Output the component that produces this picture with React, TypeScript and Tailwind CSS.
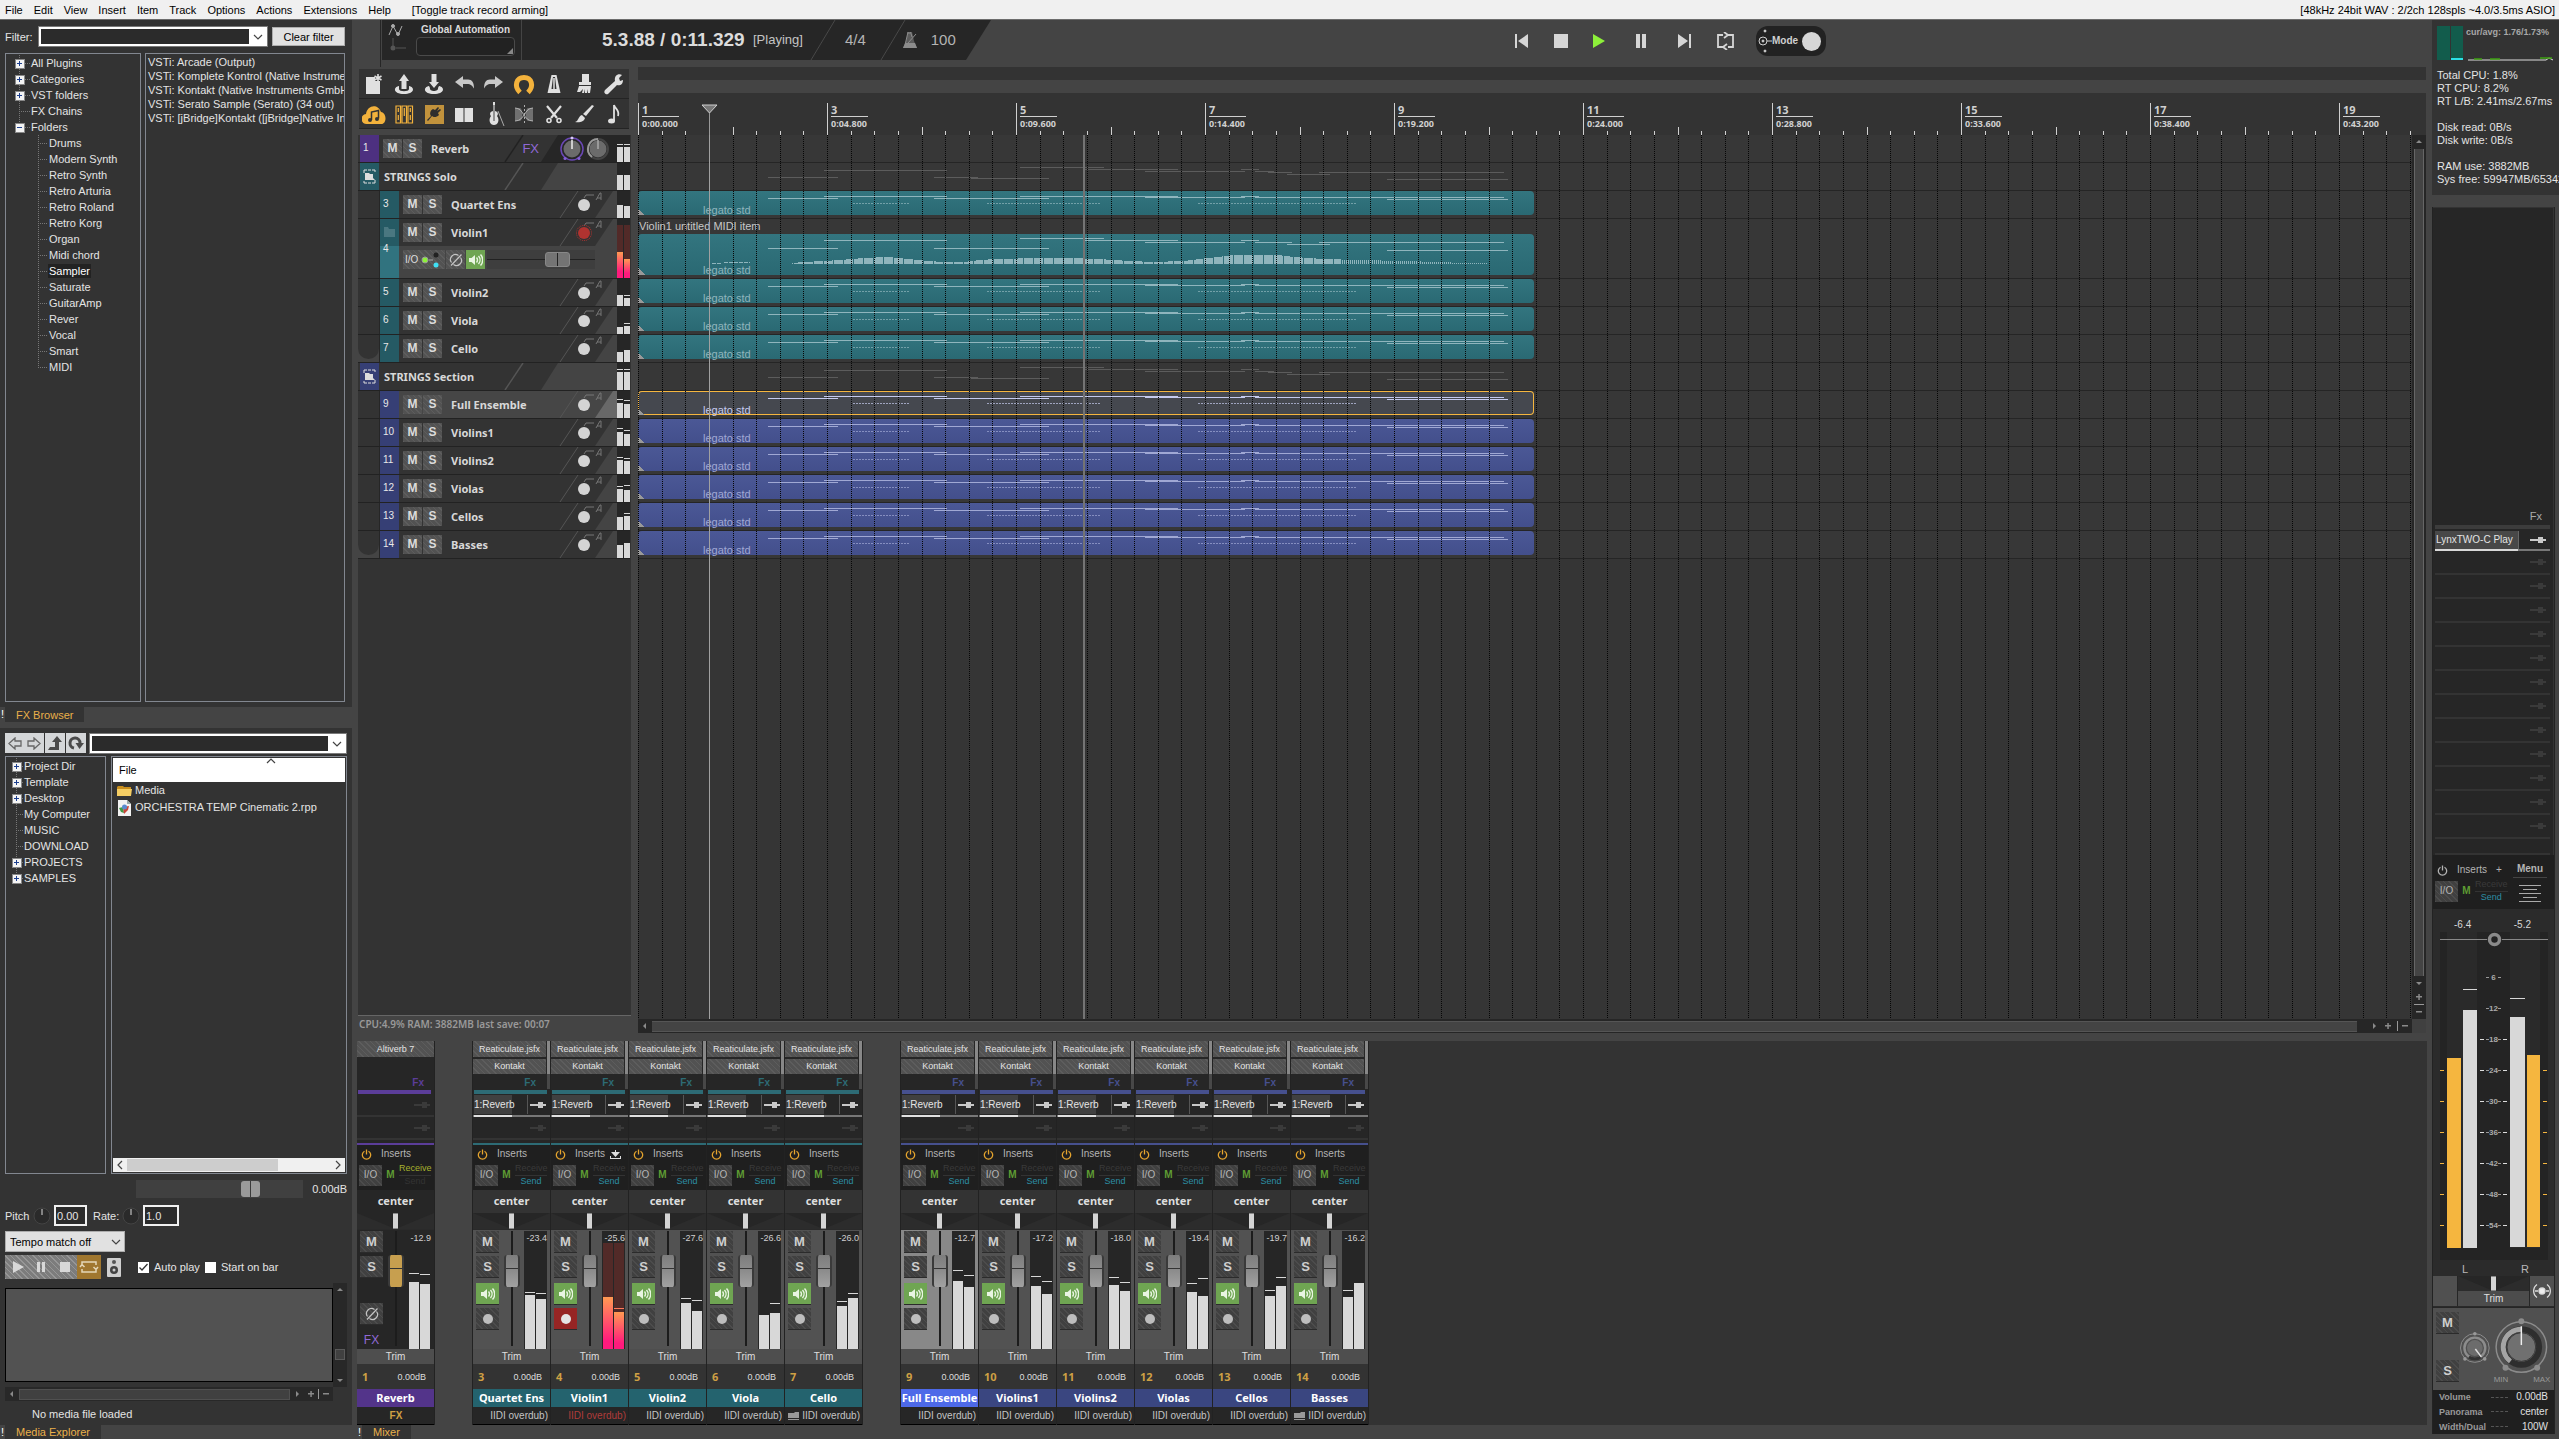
import type { ReactNode } from 'react';
import clsx from 'clsx';

type Tone = 'purple' | 'teal' | 'blue';

type Track = {
  id: number;
  name: string;
  tone: Tone;
  kind: 'fx' | 'folder' | 'track';
  meter: [number, number];
  peaks?: [number, number];
  selected?: boolean;
  armed?: boolean;
};

type Strip = {
  id: number;
  name: string;
  tone: Tone;
  db: string;
  bars: [number, number];
  peaks: [number, number];
  selected?: boolean;
  armed?: boolean;
  last?: boolean;
};

const MENU = ['File', 'Edit', 'View', 'Insert', 'Item', 'Track', 'Options', 'Actions', 'Extensions', 'Help'];

const FX_ROOTS = ['All Plugins', 'Categories', 'VST folders', 'FX Chains', 'Folders'];
const FX_FOLDERS = [
  'Drums', 'Modern Synth', 'Retro Synth', 'Retro Arturia', 'Retro Roland', 'Retro Korg', 'Organ',
  'Midi chord', 'Sampler', 'Saturate', 'GuitarAmp', 'Rever', 'Vocal', 'Smart', 'MIDI',
];
const PLUGINS = [
  'VSTi: Arcade (Output)',
  'VSTi: Komplete Kontrol (Native Instrumer',
  'VSTi: Kontakt (Native Instruments GmbH',
  'VSTi: Serato Sample (Serato) (34 out)',
  'VSTi: [jBridge]Kontakt ([jBridge]Native Ins',
];
const MEDIA_ROOTS = ['Project Dir', 'Template', 'Desktop', 'My Computer', 'MUSIC', 'DOWNLOAD', 'PROJECTS', 'SAMPLES'];
const NO_CHILDREN = ['FX Chains', 'My Computer', 'MUSIC', 'DOWNLOAD'];

const TRACKS: Track[] = [
  { id: 1, name: 'Reverb', tone: 'purple', kind: 'fx', meter: [15, 15], peaks: [17, 17] },
  { id: 2, name: 'STRINGS Solo', tone: 'teal', kind: 'folder', meter: [15, 15] },
  { id: 3, name: 'Quartet Ens', tone: 'teal', kind: 'track', meter: [13, 12] },
  { id: 4, name: 'Violin1', tone: 'teal', kind: 'track', meter: [26, 19], armed: true },
  { id: 5, name: 'Violin2', tone: 'teal', kind: 'track', meter: [11, 8], peaks: [0, 10] },
  { id: 6, name: 'Viola', tone: 'teal', kind: 'track', meter: [7, 8], peaks: [0, 10] },
  { id: 7, name: 'Cello', tone: 'teal', kind: 'track', meter: [10, 12] },
  { id: 8, name: 'STRINGS Section', tone: 'blue', kind: 'folder', meter: [18, 18], peaks: [20, 20] },
  { id: 9, name: 'Full Ensemble', tone: 'blue', kind: 'track', meter: [15, 14], peaks: [18, 17], selected: true },
  { id: 10, name: 'Violins1', tone: 'blue', kind: 'track', meter: [14, 12], peaks: [17, 15] },
  { id: 11, name: 'Violins2', tone: 'blue', kind: 'track', meter: [14, 13], peaks: [16, 15] },
  { id: 12, name: 'Violas', tone: 'blue', kind: 'track', meter: [13, 12], peaks: [15, 16] },
  { id: 13, name: 'Cellos', tone: 'blue', kind: 'track', meter: [13, 14], peaks: [0, 16] },
  { id: 14, name: 'Basses', tone: 'blue', kind: 'track', meter: [13, 15] },
];

const SOLO_STRIPS: Strip[] = [
  { id: 3, name: 'Quartet Ens', tone: 'teal', db: '-23.4', bars: [54, 50], peaks: [56, 55] },
  { id: 4, name: 'Violin1', tone: 'teal', db: '-25.6', bars: [52, 37], peaks: [0, 40], armed: true },
  { id: 5, name: 'Violin2', tone: 'teal', db: '-27.6', bars: [46, 38], peaks: [50, 48] },
  { id: 6, name: 'Viola', tone: 'teal', db: '-26.6', bars: [34, 36], peaks: [0, 45] },
  { id: 7, name: 'Cello', tone: 'teal', db: '-26.0', bars: [43, 51], peaks: [47, 55], last: true },
];
const SECTION_STRIPS: Strip[] = [
  { id: 9, name: 'Full Ensemble', tone: 'blue', db: '-12.7', bars: [68, 62], peaks: [78, 73], selected: true },
  { id: 10, name: 'Violins1', tone: 'blue', db: '-17.2', bars: [63, 55], peaks: [72, 67] },
  { id: 11, name: 'Violins2', tone: 'blue', db: '-18.0', bars: [64, 58], peaks: [71, 66] },
  { id: 12, name: 'Violas', tone: 'blue', db: '-19.4', bars: [57, 53], peaks: [65, 70] },
  { id: 13, name: 'Cellos', tone: 'blue', db: '-19.7', bars: [53, 63], peaks: [58, 71] },
  { id: 14, name: 'Basses', tone: 'blue', db: '-16.2', bars: [52, 66], peaks: [58, 0], last: true },
];
const REVERB_STRIP: Strip = { id: 1, name: 'Reverb', tone: 'purple', db: '-12.9', bars: [67, 65], peaks: [75, 74] };

const MARKERS = [
  ['1', '0:00.000'], ['3', '0:04.800'], ['5', '0:09.600'], ['7', '0:14.400'], ['9', '0:19.200'],
  ['11', '0:24.000'], ['13', '0:28.800'], ['15', '0:33.600'], ['17', '0:38.400'], ['19', '0:43.200'],
];

// note runs as [start, end, y]
const NOTES = [
  [130, 200, 7], [186, 309, 5], [296, 411, 7], [382, 540, 5], [507, 607, 6],
  [603, 621, 5], [617, 866, 6], [749, 870, 8],
];
const WIDE_NOTES = [
  [130, 200, 14], [186, 309, 6], [296, 411, 14], [382, 466, 4], [447, 540, 6], [507, 607, 8],
  [603, 621, 6], [617, 654, 8], [649, 692, 10], [681, 866, 8], [749, 870, 16],
];
const FOLDER_NOTES = [
  [130, 200, 14], [186, 309, 7], [296, 340, 14], [333, 411, 15], [382, 466, 4], [447, 540, 6],
  [507, 607, 8], [603, 621, 6], [617, 636, 8], [630, 654, 9], [649, 692, 11], [681, 866, 9], [749, 870, 16],
];

// velocity envelope of the tall item as [x, height]
const ENVELOPE = [
  [154, 1], [165, 2], [185, 3], [200, 4], [225, 6], [250, 7], [270, 5], [290, 3], [305, 2], [325, 2],
  [340, 4], [360, 5], [400, 6], [430, 6], [460, 5], [490, 3], [515, 2], [545, 3], [560, 5], [580, 7],
  [595, 9], [640, 9], [655, 7], [685, 5], [720, 4], [765, 3], [800, 2], [825, 1], [850, 1],
];

const HATCH = 'bg-[repeating-linear-gradient(45deg,#5d5d5d_0_1px,#525252_1px_4px)]';
const HATCH_DARK = 'bg-[repeating-linear-gradient(45deg,#4c4c4c_0_1px,#404040_1px_4px)]';
const NAME_FONT = "font-['Noto_Sans',sans-serif] font-bold";

function velocityBars() {
  const out: [number, number][] = [];
  for (let x = 154; x < 850; x += 2) {
    const i = ENVELOPE.findIndex(([px]) => px > x);
    const [x0, h0] = ENVELOPE[i - 1];
    const [x1, h1] = ENVELOPE[i];
    out.push([x, Math.round(h0 + ((h1 - h0) * (x - x0)) / (x1 - x0))]);
  }
  return out;
}

/* ---------- shared bits ---------- */

function Chevron({ className }: { className?: string }) {
  return (
    <svg className={className} width="10" height="6" viewBox="0 0 10 6" fill="none" stroke="#444" strokeWidth="1.2">
      <path d="M1 1l4 4 4-4" />
    </svg>
  );
}

function TreeRow({ label, indent, stem, box, open, last, active }: {
  label: string; indent: number; stem: number; box?: boolean; open?: boolean; last?: boolean; active?: boolean;
}) {
  return (
    <li className="flex h-4 items-center whitespace-nowrap">
      <svg width={indent} height="16" viewBox={`0 0 ${indent} 16`} className="shrink-0" shapeRendering="crispEdges">
        <path d={`M${stem + 0.5} 0V${last ? 8 : 16}M${stem} 8.5H${indent}`} stroke="#777" strokeDasharray="1 1" fill="none" />
        {box && (
          <g>
            <rect x={stem - 4} y="4" width="9" height="9" fill="#f4f4f4" stroke="#888" strokeWidth="1" />
            <path d={open ? `M${stem - 2} 8.5h5` : `M${stem - 2} 8.5h5M${stem + 0.5} 6v5`} stroke="#1d3f8f" />
          </g>
        )}
      </svg>
      <span className={clsx('px-px', active && 'bg-[#222] text-white')}>{label}</span>
    </li>
  );
}

function DockTab({ label, className }: { label: string; className?: string }) {
  return (
    <div className={clsx('flex items-stretch text-[11px] leading-[14px]', className)}>
      <span className="w-[5px] text-center text-white">!</span>
      <button className="bg-[#333] px-[11px] text-[#eab04a]">{label}</button>
    </div>
  );
}

function ScrollArrow({ dir }: { dir: 'up' | 'down' | 'left' | 'right' | 'plus' | 'minus' }) {
  const d = {
    up: 'M4 8l3-3 3 3z', down: 'M4 6l3 3 3-3z', left: 'M8 4L5 7l3 3z', right: 'M6 4l3 3-3 3z',
    plus: 'M4 6h6v1.500H4zM6.300 4h1.500v6H6.300z', minus: 'M4 6h6v1.500H4z',
  }[dir];
  return (
    <svg width="14" height="14" viewBox="0 0 14 14" fill="#8a8a8a" className="shrink-0">
      <path d={d} />
    </svg>
  );
}

function SpeakerIcon() {
  return (
    <svg width="15" height="14" viewBox="0 0 15 14" fill="none" stroke="#e9f5e2" strokeWidth="1.4">
      <path d="M1 5h2.500L7 2v10L3.500 9H1z" fill="#e9f5e2" stroke="none" />
      <path d="M8.500 4.500a4 4 0 010 5M10.500 3a6 6 0 010 8M12.500 1.500a8 8 0 010 11" />
    </svg>
  );
}

function PhaseIcon() {
  return (
    <svg width="14" height="14" viewBox="0 0 14 14" fill="none" stroke="#c4c4c4" strokeWidth="1.2">
      <path d="M2.500 9.500a5 5 0 017-7M11.500 4.500a5 5 0 01-7 7M2 12.500L12.500 1.500" />
    </svg>
  );
}

function PowerIcon({ color = '#e6a52e' }: { color?: string }) {
  return (
    <svg width="11" height="11" viewBox="0 0 11 11" fill="none" stroke={color} strokeWidth="1.3">
      <path d="M3.500 2.200a4.200 4.200 0 104 0M5.500 0.500v5" />
    </svg>
  );
}

function SendPlug({ active }: { active?: boolean }) {
  return (
    <svg width="16" height="6" viewBox="0 0 16 6" fill={active ? '#c8c8c8' : '#3a3a3a'} className="shrink-0">
      <path d="M0 2h8V0h5v2h3v2h-3v2H8V4H0z" />
    </svg>
  );
}

/* ---------- menu and transport ---------- */

function MenuBar() {
  return (
    <header className="flex h-5 shrink-0 items-center border-b border-[#6c6c6c] bg-[#f0f0f0] pr-1 pl-[5px] text-[11px] text-black">
      <nav className="flex gap-[11px]">
        {MENU.map((m) => (
          <button key={m}>{m}</button>
        ))}
      </nav>
      <span className="ml-[21px]">[Toggle track record arming]</span>
      <span className="ml-auto">[48kHz 24bit WAV : 2/2ch 128spls ~4.0/3.5ms ASIO]</span>
    </header>
  );
}

function TransportButton({ label, children }: { label: string; children: ReactNode }) {
  return (
    <button aria-label={label} className="flex w-[41px] justify-center">
      <svg width="24" height="18" viewBox="0 0 24 18" fill="#d6d6d6">{children}</svg>
    </button>
  );
}

function Transport() {
  return (
    <div className="flex h-[47px] shrink-0">
      <div className="ml-[23px] w-px bg-[#262626]" />
      <div className="relative ml-px flex h-10 w-[609px] items-center bg-[#262626] text-[#dcdcdc] [clip-path:polygon(0_0,100%_0,584px_100%,0_100%)]">
        <div className="flex h-10 w-[140px] shrink-0 gap-2 border-r border-[#444] pl-1.5">
          <svg width="20" height="36" viewBox="0 0 20 36" fill="none" stroke="#aaa" className="shrink-0">
            <path d="M1 15L5 6l5 9 4-9" />
            <circle cx="5" cy="6" r="1.500" fill="#aaa" />
            <circle cx="10" cy="14" r="1.500" fill="#aaa" />
            <path d="M5 18v8M8 28h10" stroke="#555" />
            <circle cx="5" cy="28" r="2.500" fill="#555" stroke="none" />
          </svg>
          <label className="flex w-[99px] flex-col items-center text-[10px] font-bold leading-[14px]">
            <span className="pt-[3px] whitespace-nowrap">Global Automation</span>
            <span className="relative w-full">
              <select className="block h-[19px] w-full appearance-none rounded-sm border border-[#4a4a4a] bg-[#222]" />
              <svg width="6" height="6" viewBox="0 0 6 6" className="absolute right-0.5 bottom-0.5" fill="#888"><path d="M6 0v6H0z" /></svg>
            </span>
          </label>
        </div>
        <span className="ml-[80px] w-[151px] shrink-0 text-[19px] font-bold whitespace-nowrap">5.3.88 / 0:11.329</span>
        <span className="text-[13px] text-[#c4c4c4]">[Playing]</span>
        <svg width="100" height="40" viewBox="0 0 100 40" className="absolute top-0 left-[426px]" stroke="#484848" fill="none">
          <path d="M27 0L3 40M97 0L73 40" />
        </svg>
        <span className="ml-[42px] text-[15px] text-[#b4b4b4]">4/4</span>
        <svg width="16" height="18" viewBox="0 0 16 18" className="ml-[36px]" fill="none">
          <path d="M6 1h4l2 9 3 7H1l3-7z" fill="#5c5c5c" />
          <path d="M3 12h10l2 5H1z" fill="#8c8c8c" />
          <path d="M5.500 2h3M6 1L3.500 12M8.500 1L10 6M6 12l8-9" stroke="#8c8c8c" />
        </svg>
        <span className="ml-[13px] text-[15px] text-[#b4b4b4]">100</span>
      </div>
      <div className="ml-[509px] flex h-[42px] items-center">
        <TransportButton label="Go to start"><path d="M6 2h2v14H6zM19 2v14L9 9z" /></TransportButton>
        <TransportButton label="Stop"><path d="M4 2h14v14H4z" /></TransportButton>
        <TransportButton label="Play"><path d="M2 2l12 7-12 7z" fill="#8df03a" /></TransportButton>
        <TransportButton label="Pause"><path d="M4 2h4v14H4zM10 2h4v14h-4z" /></TransportButton>
        <TransportButton label="Go to end"><path d="M5 2l10 7-10 7zM16 2h2v14h-2z" /></TransportButton>
        <TransportButton label="Repeat">
          <path d="M9 3H4v12h6M13 3h6v12h-5M10 0l4 3-4 3M13 12l-4 3 4 3" fill="none" stroke="#d6d6d6" strokeWidth="1.800" />
        </TransportButton>
        <button className="ml-[10px] flex h-[30px] w-[70px] items-center rounded-[12px] bg-[#222] pl-0.5 text-[10px] font-bold text-[#d0d0d0]">
          <svg width="14" height="26" viewBox="0 0 14 26" fill="none" stroke="#d0d0d0">
            <circle cx="5" cy="13" r="4" />
            <circle cx="5" cy="13" r="1" fill="#d0d0d0" />
            <path d="M9 13h5" />
            <circle cx="7" cy="3" r="1" fill="#d0d0d0" />
            <circle cx="7" cy="23" r="1" fill="#d0d0d0" />
          </svg>
          Mode
          <span className="ml-1 size-[19px] rounded-full bg-[#d6d6d6]" />
        </button>
      </div>
    </div>
  );
}

/* ---------- left docks ---------- */

function Combo({ id, className }: { id: string; className?: string }) {
  return (
    <span className={clsx('flex h-[21px] items-center border border-[#7a7a7a] bg-white p-0.5 pr-1', className)}>
      <input id={id} aria-label={id} className="h-full min-w-0 flex-1 bg-[#2b2b2b] px-1 text-white outline-none" />
      <Chevron className="ml-1" />
    </span>
  );
}

function FxBrowser() {
  return (
    <section className="flex min-h-0 flex-1 flex-col bg-[#333] px-[5px] pb-[5px] text-[#e4e4e4]">
      <div className="flex h-[33px] items-center gap-1 pr-0.5">
        <label htmlFor="Filter" className="w-[29px] shrink-0">Filter:</label>
        <Combo id="Filter" className="flex-1" />
        <button className="h-[19px] w-[73px] border border-[#adadad] bg-[#e1e1e1] text-black">Clear filter</button>
      </div>
      <div className="flex min-h-0 flex-1 gap-1 pr-0.5">
        <ul className="w-[136px] border border-[#828790] pt-px">
          {FX_ROOTS.map((r) => (
            <TreeRow key={r} label={r} indent={24} stem={13} box={!NO_CHILDREN.includes(r)} open={r === 'Folders'} last={r === 'Folders'} />
          ))}
          {FX_FOLDERS.map((f, i) => (
            <TreeRow key={f} label={f} indent={42} stem={32} last={i === FX_FOLDERS.length - 1} active={f === 'Sampler'} />
          ))}
        </ul>
        <ul className="min-w-0 flex-1 overflow-hidden border border-[#828790] pt-px pl-0.5 leading-[14px] whitespace-nowrap">
          {PLUGINS.map((p) => (
            <li key={p}>{p}</li>
          ))}
        </ul>
      </div>
    </section>
  );
}

function MiniKnob() {
  return (
    <svg width="18" height="18" viewBox="0 0 18 18">
      <circle cx="9" cy="9" r="8" fill="#2a2a2a" stroke="#444" />
      <path d="M9 2v6" stroke="#ddd" />
    </svg>
  );
}

function MediaExplorer() {
  return (
    <section className="flex shrink-0 flex-col bg-[#333] px-[5px] pt-[5px] text-[#e4e4e4]">
      <div className="flex h-[21px] gap-px">
        <div className="flex h-5 w-[39px] bg-[#d4d6d8]">
          <button aria-label="Back" className="flex-1 pl-[3px]">
            <svg width="15" height="13" viewBox="0 0 15 13" fill="none" stroke="#666" strokeWidth="1.300"><path d="M7 1L1 6.500 7 12V9h6V4H7z" /></svg>
          </button>
          <button aria-label="Forward" className="flex-1 pl-0.5">
            <svg width="15" height="13" viewBox="0 0 15 13" fill="none" stroke="#666" strokeWidth="1.300"><path d="M7 1l6 5.500L7 12V9H1V4h6z" /></svg>
          </button>
        </div>
        <button aria-label="Parent folder" className="h-5 w-5 bg-[#d4d6d8] pl-[3px]">
          <svg width="15" height="15" viewBox="0 0 15 15" fill="#4a4a4a"><path d="M9 0l5 6h-3v8H0l2-3h5V6H4z" /></svg>
        </button>
        <button aria-label="Refresh" className="h-5 w-5 bg-[#d4d6d8] pl-0.5">
          <svg width="16" height="16" viewBox="0 0 16 16"><path d="M6 13a5 5 0 116-5" fill="none" stroke="#4a4a4a" strokeWidth="3" /><path d="M7.500 8h8.500l-4.500 6z" fill="#4a4a4a" /></svg>
        </button>
        <Combo id="Path" className="ml-0.5 flex-1" />
      </div>
      <div className="mt-0.5 flex h-[418px] gap-[5px]">
        <ul className="w-[101px] border border-[#828790] pt-px">
          {MEDIA_ROOTS.map((r, i) => (
            <TreeRow key={r} label={r} indent={17} stem={10} box={!NO_CHILDREN.includes(r)} last={i === MEDIA_ROOTS.length - 1} />
          ))}
        </ul>
        <div className="flex min-w-0 flex-1 flex-col border border-[#828790] p-px">
          <button className="relative h-6 bg-white pl-[6px] text-left text-black">
            File
            <Chevron className="absolute top-0 left-[153px] rotate-180" />
          </button>
          <ul className="flex-1 leading-[17px] whitespace-nowrap">
            <li className="flex items-center gap-[3px] pl-1">
              <svg width="15" height="12" viewBox="0 0 15 12"><path d="M0 2l1-1h5l1 1h7v9H0z" fill="#c98f1e" /><path d="M0 4h15l-1 7H0z" fill="#f4cd63" /></svg>
              Media
            </li>
            <li className="flex items-center gap-[3px] pl-1">
              <svg width="15" height="16" viewBox="0 0 15 16"><path d="M1 0h9l4 4v12H1z" fill="#f2f2f2" /><path d="M10 0v4h4z" fill="#9aa" /><path d="M2 8l4-1 1 6-3-1z" fill="#3f9a47" /><path d="M6 7l6-1-1 4-4 4z" fill="#c9453a" /><circle cx="7.500" cy="7" r="2.500" fill="#5a8bd0" /></svg>
              ORCHESTRA TEMP Cinematic 2.rpp
            </li>
          </ul>
          <div className="flex h-[14px] items-center bg-[#f0f0f0]">
            <Chevron className="w-[14px] rotate-90" />
            <span className="h-3 w-[151px] bg-[#cdcdcd]" />
            <Chevron className="ml-auto w-[14px] -rotate-90" />
          </div>
        </div>
      </div>
      <div className="mt-1.5 flex h-[18px] items-center justify-end">
        <input
          type="range" aria-label="Preview volume" defaultValue={71}
          className="h-[18px] w-[167px] appearance-none bg-[#404040] [&::-webkit-slider-thumb]:h-4 [&::-webkit-slider-thumb]:w-[19px] [&::-webkit-slider-thumb]:appearance-none [&::-webkit-slider-thumb]:rounded-[3px] [&::-webkit-slider-thumb]:bg-[linear-gradient(90deg,#9a9a9a_0_9px,#3a3a3a_9px_10px,#9a9a9a_10px)]"
        />
        <output className="w-[44px] text-right">0.00dB</output>
      </div>
      <div className="mt-[7px] flex h-[21px] items-center">
        <label htmlFor="pitch" className="w-7">Pitch</label>
        <MiniKnob />
        <input id="pitch" defaultValue="0.00" className="mr-1.5 ml-[3px] h-[21px] w-[33px] border-2 border-[#f0f0f0] bg-[#2b2b2b] pl-px text-[11px] text-[#e4e4e4]" />
        <label htmlFor="rate" className="w-[29px]">Rate:</label>
        <MiniKnob />
        <input id="rate" defaultValue="1.0" className="ml-[3px] h-[21px] w-9 border-2 border-[#f0f0f0] bg-[#2b2b2b] pl-px text-[11px] text-[#e4e4e4]" />
      </div>
      <div className="relative mt-[5px] w-[120px]">
        <select aria-label="Tempo match" className="h-[21px] w-full appearance-none border border-[#adadad] bg-[#e1e1e1] pl-1 text-[11px] text-black">
          <option>Tempo match off</option>
        </select>
        <Chevron className="absolute top-2 right-1" />
      </div>
      <div className="mt-[3px] flex h-6 items-center">
        <div className="flex h-6 bg-[repeating-linear-gradient(45deg,#969696_0_1px,#7c7c7c_1px_4px)]">
          {[['Preview', 'M8 6l11 6-11 6z'], ['Pause preview', 'M8 7h3v10H8zM13 7h3v10h-3z'], ['Stop preview', 'M7 7h10v10H7z']].map(([l, d]) => (
            <button key={l} aria-label={l}><svg width="24" height="24" viewBox="0 0 24 24" fill="#d8d8d8"><path d={d} /></svg></button>
          ))}
        </div>
        <button aria-label="Repeat preview" className="size-6 bg-[#a0772f]">
          <svg width="24" height="24" viewBox="0 0 24 24" fill="none" stroke="#e4d7b8" strokeWidth="1.500"><path d="M5 10V7h14v3M19 14v3H5v-3M3 12l2-2.500L7.500 12M16.500 12l2.500 2.500 2-2.500" /></svg>
        </button>
        <button aria-label="Output" className="ml-1.5">
          <svg width="14" height="19" viewBox="0 0 14 19"><rect width="14" height="19" rx="1" fill="#cfcfcf" /><circle cx="7" cy="4" r="2" fill="#555" /><circle cx="7" cy="12" r="4" fill="#444" /><circle cx="7" cy="12" r="1.500" fill="#ccc" /></svg>
        </button>
        <label className="ml-[17px] flex items-center gap-[5px]">
          <span className="relative flex size-[11px]">
            <input type="checkbox" defaultChecked className="peer size-[11px] appearance-none bg-white" />
            <svg className="pointer-events-none absolute inset-0 hidden peer-checked:block" width="11" height="11" viewBox="0 0 11 11" fill="none" stroke="#333" strokeWidth="1.300"><path d="M1.500 5.500L4 8l5.500-6" /></svg>
          </span>
          Auto play
        </label>
        <label className="ml-[5px] flex items-center gap-[5px]">
          <input type="checkbox" className="size-[11px] appearance-none bg-white" />
          Start on bar
        </label>
      </div>
      <div className="mt-1 flex h-[104px]">
        <div className="my-[5px] flex-1 border border-black bg-[#525252]" />
        <div className="flex w-[14px] flex-col bg-[#282828]">
          <ScrollArrow dir="up" />
          <span className="mx-0.5 mt-[52px] h-[11px] border border-[#5a5a5a] bg-[#404040]" />
          <span className="mt-auto"><ScrollArrow dir="down" /></span>
        </div>
      </div>
      <div className="mr-[14px] flex h-[14px] items-center bg-[#282828]">
        <ScrollArrow dir="left" />
        <span className="h-[11px] flex-1 border border-[#505050] bg-[#404040]" />
        <ScrollArrow dir="right" />
        <ScrollArrow dir="plus" />
        <span className="h-2.5 border-l border-[#999]" />
        <ScrollArrow dir="minus" />
      </div>
      <p className="h-6 pl-[27px] leading-[26px]">No media file loaded</p>
    </section>
  );
}

/* ---------- toolbar ---------- */

const W = '#e0e0e0';
const Y = '#f3b23c';
const TOOLS: [string, ReactNode][] = [
  ['New project', <><path d="M4 5h9v4h5v13H4z" fill={W} /><path d="M16 2v8M12.500 4l7 4M19.500 4l-7 4" stroke={W} strokeWidth="1.600" /></>],
  ['Open project', <><path d="M12 2l5 7h-2.500v8h-5V9H7z" fill={W} /><path d="M7 14c-6 1-6 8 5 8s11-7 5-8v3c0 3-10 3-10 0z" fill={W} /></>],
  ['Save project', <><path d="M12 16l5-6h-2.500V2h-5v8H7z" fill={W} /><path d="M7 14c-6 1-6 8 5 8s11-7 5-8l-1 2c1 4-9 4-8 0z" fill={W} /></>],
  ['Undo', <path d="M3 10l8-6v3.500h5c4 0 6 3 6 9-2-3-3-4.500-7-4.500h-4v4z" fill="#c8c8c8" />],
  ['Redo', <path d="M21 10l-8-6v3.500H8c-4 0-6 3-6 9 2-3 3-4.500 7-4.500h4v4z" fill="#c8c8c8" />],
  ['Snap', <path d="M8 20.500C1.500 14 4.500 5.500 12 5.500s10.500 8.500 4 15" stroke={Y} strokeWidth="5" fill="none" />],
  ['Metronome', <><path d="M9.500 3h5L18.500 21h-13z" fill={W} /><path d="M11 5h2l1.500 12h-5z" fill="#333" /><path d="M12 6v12" stroke={W} strokeWidth="1.500" /></>],
  ['Clean', <path d="M10 2h7v8h2v3H7v-3h3zM7 14h12l-1 7h-2v-4l-1 4h-2v-4l-1 4h-2l1-4-3 3H5z" fill={W} />],
  ['Settings', <path d="M3 18L13 9c-1-5 3-8 7-6l-3 3 1 3 3-1c0 5-4 6-6 5L6 22c-2 1-5-1-3-4z" fill={W} />],
  ['Cloud', <><path d="M5 22a5 5 0 01-1-10c1-9 12-11 15-2 6 1 6 12 0 12z" fill={Y} /><path d="M9.500 18V10l7-1.500v8" stroke="#333" strokeWidth="1.500" fill="none" /><circle cx="8" cy="18" r="2" fill="#333" /><circle cx="15" cy="17" r="2" fill="#333" /></>],
  ['Mixer', <g fill="none" stroke={Y} strokeWidth="1.200"><path d="M4 4h4.500v17H4zM10 4h4.500v17H10zM16 4h4.500v17H16z" /><path d="M6.300 6v4M6.300 13v5M12.300 6v8M18.300 6v4M18.300 13v5" /></g>],
  ['Plug-ins', <><path d="M3 3h19v19H3z" fill="#c1923c" /><path d="M16 5l1 1-2 3 3-2 1 1-3 3 1 2c-3 3-6 2-7 1l-4 5-1-1 4-4c-2-3 0-6 2-7l2 1z" fill="#2d2d2d" /></>],
  ['Split view', <path d="M3 6h8.500v14H3zM12.500 6H21v14h-8.500z" fill={W} />],
  ['Instruments', <><path d="M11 0h2v9c4 1 3 4 2 5 3 4 1 9-3 9s-6-5-3-9c-1-1-2-4 2-5z" fill={W} /><path d="M16 9l6 15" stroke="#aaa" /><path d="M12 3v16" stroke="#444" /></>],
  ['Crossfade', <g><path d="M3 6h5c3 1 3 12 0 13H3zM21 6h-5c-3 1-3 12 0 13h5z" fill="#707070" /><path d="M3 6c9 0 8 13 18 13M21 6c-9 0-8 13-18 13" stroke="#b0b0b0" fill="none" /><path d="M12.500 3v19" stroke="#b0b0b0" strokeDasharray="2 2" /></g>],
  ['Cut', <g stroke={W} fill="none" strokeWidth="2.200"><path d="M5 4l10 12M19 4L9 16" /><circle cx="7" cy="18.500" r="2" strokeWidth="1.600" /><circle cx="17" cy="18.500" r="2" strokeWidth="1.600" /></g>],
  ['Paint', <path d="M20 3l2 1-8 10-3-2zM10 13l3 3c-1 4-6 5-10 4 4-1 3-6 7-7z" fill={W} />],
  ['Notes', <><path d="M12 3v16M12 3c1 4 6 5 4 11" stroke={W} fill="none" strokeWidth="1.800" /><ellipse cx="9.500" cy="19" rx="3.500" ry="2.500" fill={W} /></>],
];

function Toolbar() {
  return (
    <div className="ml-px grid w-[270px] grid-cols-9 bg-[#333]">
      {TOOLS.map(([label, icon]) => (
        <button key={label} aria-label={label} className="flex h-[30px] items-center justify-center border-b border-[#242424]">
          <svg width="24" height="24" viewBox="0 0 24 24" fill="none">{icon}</svg>
        </button>
      ))}
    </div>
  );
}

/* ---------- track panel ---------- */

const NUM_BG: Record<Tone, string> = { purple: 'bg-[#4d3080]', teal: 'bg-[#255a64]', blue: 'bg-[#363f75]' };

function PanelMeter({ track }: { track: Track }) {
  return (
    <div className={clsx('flex w-[13px] shrink-0 gap-px bg-[#262626]', track.armed && 'pt-1.5')}>
      {track.meter.map((h, i) => (
        <div key={i} className={clsx('relative flex w-1.5 items-end', track.armed && 'bg-[#522a28]')}>
          <span
            style={{ height: h }}
            className={clsx('w-full', track.armed ? 'bg-[linear-gradient(#ff9a52,#ff1a7d_75%)]' : 'bg-[#d8d8d8]')}
          />
          {track.peaks && track.peaks[i] > 0 && (
            <span style={{ bottom: track.peaks[i] }} className="absolute left-0 h-px w-full bg-[#d8d8d8]" />
          )}
        </div>
      ))}
    </div>
  );
}

function PanelButton({ children }: { children: string }) {
  return (
    <button className={clsx('h-[19px] w-[19px] shrink-0 text-[12px] leading-[19px] font-bold text-[#dcdcdc]', HATCH)}>{children}</button>
  );
}

function TrackKnob({ dim }: { dim?: boolean }) {
  return (
    <svg width="26" height="26" viewBox="0 0 26 26" fill="none">
      {dim ? (
        <>
          <circle cx="13" cy="13" r="10" stroke="#444" strokeWidth="2" />
          <path d="M7 21A10 10 0 0113 3" stroke="#999" strokeWidth="2" />
        </>
      ) : (
        <>
          <circle cx="13" cy="13" r="11" stroke="#6a48b5" strokeWidth="1.500" />
          <circle cx="6" cy="22.500" r="1.500" fill="#8560d6" />
          <circle cx="20" cy="22.500" r="1.500" fill="#8560d6" />
          <circle cx="13" cy="2" r="1.500" fill="#d8ccf5" />
        </>
      )}
      <circle cx="13" cy="13" r="8.500" fill="#6b6b6b" />
      <path d="M13 4v9" stroke={dim ? '#aaa' : '#eee'} strokeWidth="1.500" />
    </svg>
  );
}

function TrackRow({ track }: { track: Track }) {
  const child = track.kind === 'track';
  const lastChild = track.id === 7 || track.id === 14;
  return (
    <div className={clsx('flex border-b border-[#222]', track.armed ? 'h-[60px]' : 'h-7')}>
      {child && (
        <div className="flex w-[22px] shrink-0 border-r border-[#262626] bg-[#444]">
          <span className={clsx('w-full bg-[#333]', lastChild && 'mb-[3px] rounded-b-[11px]')} />
        </div>
      )}
      <div
        className={clsx(
          'relative w-[19px] shrink-0 text-[10px] text-[#e8e8e8]',
          !child && 'ml-0.5',
          track.armed ? 'bg-[linear-gradient(#255a64_0_27px,#31737f_27px)] pt-[24px] pl-[3px] leading-3' : clsx(NUM_BG[track.tone], 'pl-[3px] leading-[26px]'),
        )}
      >
        {track.armed && (
          <svg width="11" height="10" viewBox="0 0 11 10" className="absolute top-2 left-1" fill="#4a7780"><path d="M0 0h4l1 2h6v8H0z" /></svg>
        )}
        {track.kind === 'folder' ? (
          <svg width="13" height="15" viewBox="0 0 13 15" fill="none" stroke="#ddd" className="mt-1.5">
            <path d="M1 4V1h3M9 1h3v2M12 11v3H9M4 14H1v-2M5 1h3M5 14h3" />
            <path d="M2 4h4l1 1h3v4l2 2H2z" fill="#ddd" stroke="none" />
          </svg>
        ) : track.id}
      </div>
      <div className="relative min-w-0 flex-1 bg-[#444]">
        <div className={clsx('relative flex h-[27px] items-center gap-px pl-1', track.selected ? 'bg-[#464646]' : 'bg-[#333]')}>
          {child ? (
            <svg width="62" height="27" viewBox="0 0 62 27" className="absolute top-0 right-0" fill="none">
              <path d="M40 27L58 0h4v27z" fill={track.selected ? '#686868' : '#444'} />
              <path d="M5 27L23 0" stroke="#555" />
              <path d="M29 7l2-3h8" stroke="#777" />
              <path d="M41 9l4-7h1v7M42 7h4" stroke="#777" />
            </svg>
          ) : (
            <svg width="120" height="27" viewBox="0 0 120 27" className="absolute top-0 right-0" fill="none">
              <path d="M44 27L61 0h59v27z" fill={track.kind === 'fx' ? '#262626' : '#444'} />
              <path d="M8 27L26 0" stroke={track.kind === 'fx' ? '#222' : '#555'} strokeWidth="1.500" />
            </svg>
          )}
          {track.kind !== 'folder' && (
            <>
              <PanelButton>M</PanelButton>
              <PanelButton>S</PanelButton>
            </>
          )}
          <span className={clsx('relative text-[11px] whitespace-nowrap text-[#d8d8d8]', NAME_FONT, track.kind === 'folder' ? 'ml-px' : 'ml-2')}>
            {track.name}
          </span>
          {child && (
            <button
              aria-label={`Record arm ${track.name}`}
              className={clsx(
                'relative mr-[27px] ml-auto size-3 rounded-full',
                track.armed ? 'bg-[#b03330] outline outline-dotted outline-offset-1 outline-[#b03330]' : 'bg-[#d4d4d4]',
              )}
            />
          )}
          {track.kind === 'fx' && (
            <div className="relative ml-auto flex items-center pr-1.5">
              <button className="mr-[20px] text-[13px] text-[#9069d6]">FX</button>
              <TrackKnob />
              <TrackKnob dim />
            </div>
          )}
        </div>
        {track.armed && (
          <div className="flex items-center pt-1 pl-1">
            <button className={clsx('flex h-[19px] w-[42px] items-center gap-0.5 pl-0.5 text-[10px] text-[#ddd]', HATCH)}>
              I/O
              <svg width="20" height="16" viewBox="0 0 20 16" fill="none">
                <circle cx="5" cy="8" r="3" fill="#8df03a" stroke="#9a9a9a" />
                <path d="M9 8h4" stroke="#aaa" />
                <circle cx="16" cy="3" r="2.500" fill="#222" />
                <circle cx="16" cy="13" r="2.500" fill="#3fe0f5" />
              </svg>
            </button>
            <button aria-label="Phase" className={clsx('ml-px flex h-[19px] w-[19px] items-center justify-center', HATCH)}><PhaseIcon /></button>
            <button aria-label="Monitor" className="ml-px flex h-[19px] w-[19px] items-center justify-center bg-[#6fa552]"><SpeakerIcon /></button>
            <input
              type="range" aria-label="Violin1 volume" defaultValue={70}
              className="ml-0.5 h-[19px] w-[108px] appearance-none bg-[linear-gradient(#3e3e3e_0_9px,#222_9px_10px,#3e3e3e_10px)] [&::-webkit-slider-thumb]:h-[15px] [&::-webkit-slider-thumb]:w-[25px] [&::-webkit-slider-thumb]:appearance-none [&::-webkit-slider-thumb]:rounded-[3px] [&::-webkit-slider-thumb]:border [&::-webkit-slider-thumb]:border-[#888] [&::-webkit-slider-thumb]:bg-[linear-gradient(90deg,#747474_0_11px,#222_11px_12px,#747474_12px)]"
            />
          </div>
        )}
      </div>
      <PanelMeter track={track} />
    </div>
  );
}

function TrackPanel() {
  return (
    <div className="ml-px flex w-[273px] shrink-0 flex-col pt-0.5">
      <Toolbar />
      <div className="mt-1.5 min-h-0 flex-1 overflow-hidden border-b border-[#666] bg-[#333] pr-px">
        {TRACKS.map((t) => (
          <TrackRow key={t.id} track={t} />
        ))}
      </div>
      <p className="h-[17px] pl-px font-['Noto_Sans',sans-serif] text-[10px] leading-[16px] font-semibold whitespace-nowrap text-[#999]">
        CPU:4.9% RAM: 3882MB last save: 00:07
      </p>
    </div>
  );
}

/* ---------- timeline ---------- */

const BEATS = Array.from({ length: 76 }, (_, i) => Math.round((i * 189) / 8));

function Ruler() {
  return (
    <div className="relative mt-[13px] flex h-[42px] overflow-hidden bg-[#333] text-[#d0d0d0]">
      <svg width="1788" height="42" viewBox="0 0 1788 42" className="absolute inset-0" shapeRendering="crispEdges" stroke="#d0d0d0">
        {BEATS.map((x, i) => (
          <path key={x} d={`M${x + 0.5} ${i % 8 === 0 ? 10 : i % 4 === 0 ? 34 : 38}V42`} />
        ))}
        <path d="M64 12h15l-7.500 8z" fill="#777" shapeRendering="auto" />
        <path d="M71.500 20v22" stroke="#999" />
      </svg>
      {MARKERS.map(([bar, time]) => (
        <div key={bar} className="flex w-[189px] shrink-0 flex-col items-start pt-[11px] pl-1 font-['Noto_Sans',sans-serif] leading-3 font-bold">
          <span className="w-[37px] border-b border-[#d0d0d0] text-[11px]">{bar}</span>
          <span className="text-[9px] leading-[13px]">{time}</span>
        </div>
      ))}
    </div>
  );
}

function MidiItem({ track }: { track: Track }) {
  const tall = track.armed;
  const notes = tall ? WIDE_NOTES : NOTES;
  const ink = track.selected ? '#c5cbef' : track.tone === 'teal' ? '#8fb5bd' : '#a0a8d4';
  return (
    <div
      className={clsx(
        'relative w-[896px] rounded-[4px]',
        tall ? 'h-[41px]' : 'h-6',
        track.selected && 'bg-[#45484f] ring-1 ring-[#f5b63f] ring-inset',
        !track.selected && track.tone === 'teal' && 'bg-[linear-gradient(#33757f,#2a6973)]',
        !track.selected && track.tone === 'blue' && 'bg-[linear-gradient(#4b5896,#434f8c)]',
      )}
    >
      <svg width="896" height={tall ? 41 : 24} className="absolute top-0 left-0" shapeRendering="crispEdges" stroke={ink} fill={ink}>
        {notes.map(([a, b, y]) => (
          <path key={`${a}-${y}`} d={`M${a} ${y + 0.5}H${b}`} />
        ))}
        {!tall && <path d="M215 12.500h56M349 12.500h114M560 12.500h158" strokeDasharray="2 1" opacity="0.7" />}
        {tall && velocityBars().map(([x, h]) => (
          <rect key={x} x={x} y={30 - h} width={x % 10 === 4 || x > 700 ? 1 : 2} height={h} stroke="none" />
        ))}
        {tall && <path d="M74 29.500h10M86 28.500h26" strokeDasharray="4 1" />}
        <path d={tall ? 'M0 34v7h7z' : 'M0 18v6h6z'} fill="#999" stroke="none" />
      </svg>
      <span
        className={clsx(
          'absolute bottom-0 left-[65px] text-[11px] leading-[9px]',
          track.selected ? 'text-[#c5cbef]' : track.tone === 'teal' ? 'text-[#8fb5bd]' : 'text-[#a0a8d4]',
        )}
      >
        legato std
      </span>
    </div>
  );
}

function Lane({ track }: { track: Track }) {
  return (
    <div className={clsx('border-b border-[#252525] bg-[#373737]', track.armed ? 'h-[60px]' : 'h-7')}>
      {track.kind === 'folder' && (
        <svg width="896" height="27" shapeRendering="crispEdges" stroke="#5c5c5c">
          {FOLDER_NOTES.map(([a, b, y]) => (
            <path key={`${a}-${y}`} d={`M${a} ${y + 0.5}H${b}`} />
          ))}
        </svg>
      )}
      {track.armed && <p className="h-[15px] pl-px text-[11px] leading-[15px] text-[#c8c8c8]">Violin1 untitled MIDI item</p>}
      {track.kind === 'track' && <MidiItem track={track} />}
    </div>
  );
}

function Timeline() {
  return (
    <div className="ml-[7px] flex min-w-0 flex-1 flex-col">
      <div className="h-[13px] shrink-0 bg-[#333]" />
      <Ruler />
      <div className="flex min-h-0 flex-1">
        <div className="relative min-w-0 flex-1 overflow-hidden bg-[#353535]">
          {TRACKS.map((t) => (
            <Lane key={t.id} track={t} />
          ))}
          <svg width="1788" height="100%" className="absolute inset-0" shapeRendering="crispEdges">
            {BEATS.map((x) => (
              <line key={x} x1={x + 0.5} x2={x + 0.5} y1="0" y2="100%" stroke="#060606" strokeDasharray="1 1" />
            ))}
            <line x1="71.500" x2="71.500" y1="0" y2="100%" stroke="#a0a0a0" />
            <line x1="446" x2="446" y1="0" y2="100%" stroke="#747474" strokeWidth="2" />
          </svg>
        </div>
        <div className="flex w-[14px] shrink-0 flex-col bg-[#262626]">
          <ScrollArrow dir="up" />
          <span className="mx-0.5 flex-1 border-x border-[#666] bg-[#444]" />
          <ScrollArrow dir="down" />
          <ScrollArrow dir="plus" />
          <span className="mx-0.5 border-t border-[#999]" />
          <ScrollArrow dir="minus" />
        </div>
      </div>
      <div className="flex h-[14px] shrink-0 items-center bg-[#262626]">
        <ScrollArrow dir="left" />
        <span className="h-[11px] flex-1 border-y border-[#555] bg-[#444]" />
        <span className="w-2.5" />
        <ScrollArrow dir="right" />
        <ScrollArrow dir="plus" />
        <span className="ml-0.5 h-2.5 border-l border-[#999]" />
        <ScrollArrow dir="minus" />
        <span className="size-[14px] bg-[#404040]" />
      </div>
    </div>
  );
}

/* ---------- mixer ---------- */

const BAR_BG: Record<Tone, string> = { purple: 'bg-[#5b3d99]', teal: 'bg-[#2d6b75]', blue: 'bg-[#46508e]' };
const FX_TEXT: Record<Tone, string> = { purple: 'text-[#5b3d99]', teal: 'text-[#2d6b75]', blue: 'text-[#46508e]' };
const NAME_BG: Record<Tone, string> = { purple: 'bg-[#53348a]', teal: 'bg-[#24636e]', blue: 'bg-[#3a4680]' };

function InsertsBlock({ purple, armed }: { purple?: boolean; armed?: boolean }) {
  return (
    <div className="h-[45px] bg-[#1f1f1f] text-[10px] text-[#b4b4b4]">
      <div className="flex h-[18px] items-center gap-[9px] pl-1">
        <PowerIcon />
        Inserts
        {armed && <svg width="11" height="9" viewBox="0 0 11 9" fill="#ddd" className="-ml-1"><path d="M5 0h1v2h4L5.500 7 1 2h4zM0 6h1v2h9V6h1v3H0z" /></svg>}
      </div>
      <div className="flex items-center gap-1 pl-0.5">
        <button className={clsx('h-[21px] w-[23px] text-[10px]', HATCH_DARK)}>I/O</button>
        <span className="w-[9px] text-center font-bold text-[#5e9c33]">M</span>
        <div className="w-[32px] text-[9px] leading-[11px]">
          <p className={clsx('border-b border-[#333] pb-px', purple ? 'text-[#a5b02d]' : 'text-[#3a3a3a]')}>Receive</p>
          <p className={clsx('text-center', purple ? 'text-[#333]' : 'text-[#2c8da3]')}>Send</p>
        </div>
      </div>
    </div>
  );
}

function PanBar({ className }: { className?: string }) {
  return (
    <div className={clsx('relative flex justify-center bg-[#262626]', className)}>
      <svg className="absolute inset-0 h-full w-full" viewBox="0 0 76 16" preserveAspectRatio="none"><path d="M0 0l38 16L76 0v16H0z" fill="#2c2c2c" /></svg>
      <span className="relative h-full w-[5px] border-y border-[#888] bg-[#d4d4d4]" />
    </div>
  );
}

const STRIP_BTN = 'flex h-[22px] w-[23px] items-center justify-center border-b border-[#2b2b2b] text-[13px] font-bold text-[#cfcfcf]';

function MixerStrip({ strip }: { strip: Strip }) {
  const purple = strip.tone === 'purple';
  const fx = purple ? ['Altiverb 7'] : ['Reaticulate.jsfx', 'Kontakt'];
  return (
    <section className="w-[78px] shrink-0 border-r border-[#222] bg-[#262626]">
      <div className="flex h-12 gap-px">
        <div className="flex flex-1 flex-col gap-0.5 text-[9px] text-[#e4e4e4]">
          {fx.map((f) => (
            <button key={f} className={clsx('h-4', HATCH)}>{f}</button>
          ))}
          <span className={clsx('mt-auto h-[13px] pr-2.5 text-right text-[10px] leading-[13px] font-bold', FX_TEXT[strip.tone])}>Fx</span>
        </div>
        {!purple && <span className="w-[3px] bg-[linear-gradient(#888_0_33px,#484848_33px)]" />}
      </div>
      <div className="h-[5px] px-px pt-px pr-[3px]"><div className={clsx('h-1', BAR_BG[strip.tone])} /></div>
      {purple ? (
        <div className="flex h-[23px] items-center justify-end border-b-2 border-[#333] pr-1"><SendPlug /></div>
      ) : (
        <div className="flex h-[23px] items-center border-b-2 border-[#777] pr-1 pl-px text-[10px] text-[#e4e4e4]">
          <button className="relative h-[19px] w-[38px] bg-[#404040] text-left whitespace-nowrap">
            1:Reverb
            <span className="absolute top-[20px] left-0 h-0.5 w-full bg-[#e0e0e0]" />
          </button>
          <span className="ml-[15px] h-[19px] border-l border-[#555]" />
          <span className="ml-auto"><SendPlug active /></span>
        </div>
      )}
      <div className="flex h-[23px] items-center justify-end border-b-2 border-[#333] pr-1"><SendPlug /></div>
      <div className={clsx('mt-[3px] h-0.5', BAR_BG[strip.tone])} />
      <InsertsBlock purple={purple} armed={strip.armed} />
      <div className={clsx('h-[23px] text-center text-[11px] leading-[22px] text-[#dedede]', NAME_FONT, purple ? 'bg-[#262626]' : 'bg-[#333]')}>center</div>
      <PanBar className="h-4" />
      <div className={clsx('flex h-[120px] border-t border-[#2a2a2a] pt-px pl-[3px]', strip.selected ? 'bg-[#888]' : purple ? 'bg-[#262626]' : 'bg-[#525252]')}>
        <div className="flex w-[23px] flex-col gap-[3px]">
          <button className={clsx(STRIP_BTN, HATCH_DARK)}>M</button>
          <button className={clsx(STRIP_BTN, HATCH_DARK)}>S</button>
          {purple ? (
            <>
              <button aria-label="Phase" className={clsx(STRIP_BTN, HATCH_DARK, 'mt-[22px]')}><PhaseIcon /></button>
              <button className="mt-1.5 text-[12px] leading-3 text-[#9069d6]">FX</button>
            </>
          ) : (
            <>
              <button aria-label="Monitor" className={clsx(STRIP_BTN, 'mt-0.5 bg-[#6fa552]')}><SpeakerIcon /></button>
              <button aria-label="Record arm" className={clsx(STRIP_BTN, strip.armed ? 'bg-[#962524]' : HATCH_DARK)}>
                <span className={clsx('size-[10px] rounded-full', strip.armed ? 'bg-[#e4e4e4]' : 'bg-[#bdbdbd]')} />
              </button>
            </>
          )}
        </div>
        <input
          type="range" aria-label={`${strip.name} volume`} defaultValue={71}
          className={clsx(
            'ml-[5px] h-[115px] w-4 appearance-none bg-[linear-gradient(90deg,transparent_0_7px,#1c1c1c_7px_9px,transparent_9px)] [direction:rtl] [writing-mode:vertical-lr] [&::-webkit-slider-thumb]:h-8 [&::-webkit-slider-thumb]:w-4 [&::-webkit-slider-thumb]:appearance-none [&::-webkit-slider-thumb]:rounded-[3px] [&::-webkit-slider-thumb]:border-y-2 [&::-webkit-slider-thumb]:border-[#3a3a3a]',
            purple
              ? '[&::-webkit-slider-thumb]:bg-[linear-gradient(#c79f4f_0_13px,#333_13px_14px,#c79f4f_14px)]'
              : '[&::-webkit-slider-thumb]:bg-[linear-gradient(#7d7d7d,#8a8a8a_13px,#333_13px_14px,#8a8a8a_14px,#a2a2a2)]',
          )}
        />
        <div className="relative ml-1 flex h-[118px] w-[23px] gap-px bg-[#262626] px-px">
          <span className="absolute top-0.5 right-0 text-[9px] leading-[10px] text-[#d0d0d0]">{strip.db}</span>
          {strip.bars.map((h, i) => (
            <div key={i} className={clsx('relative flex w-2.5 items-end', strip.armed && 'mt-3 bg-[#522a28]')}>
              <span style={{ height: h }} className={clsx('w-full', strip.armed ? 'bg-[linear-gradient(#ff9a52,#ff1a7d_85%)]' : 'bg-[#d8d8d8]')} />
              {strip.peaks[i] > 0 && (
                <span style={{ bottom: strip.peaks[i] }} className={clsx('absolute left-0 h-px w-full', strip.armed ? 'bg-[#ff7a5a]' : 'bg-[#d8d8d8]')} />
              )}
            </div>
          ))}
        </div>
      </div>
      <div className="h-[15px] bg-[#4e4e4e] text-center text-[10px] leading-[15px] text-[#dedede]">Trim</div>
      <div className="flex h-[25px] items-center justify-between bg-[#333] pr-2 pl-[5px]">
        <span className={clsx('text-[11px] text-[#cfa044]', NAME_FONT)}>{strip.id}</span>
        <span className="text-[9px] text-[#dedede]">0.00dB</span>
      </div>
      <div
        className={clsx(
          'h-[18px] text-center text-[11px] leading-[18px] whitespace-nowrap text-white', NAME_FONT,
          strip.selected ? 'bg-[#4d69e8]' : NAME_BG[strip.tone],
        )}
      >
        {strip.name}
      </div>
      <div className="flex h-[18px] items-center border-b border-black pr-0.5 pl-[3px] text-[10px]">
        {strip.last && <svg width="11" height="9" viewBox="0 0 11 9" fill="#999" className="shrink-0"><path d="M0 2h6l1-1h4v6H0zM0 8h11v1H0z" /></svg>}
        {purple ? (
          <button className="w-full text-center font-bold text-[#cfa044]">FX</button>
        ) : (
          <span className={clsx('ml-auto whitespace-nowrap', strip.armed ? 'text-[#b03c3a]' : 'text-[#c4c4c4]')}>IIDI overdub)</span>
        )}
      </div>
    </section>
  );
}

function Mixer() {
  return (
    <div className="flex h-[392px] shrink-0 pt-2">
      <MixerStrip strip={REVERB_STRIP} />
      <div className="ml-[37px] flex border-l border-[#222]">
        {SOLO_STRIPS.map((s) => (
          <MixerStrip key={s.id} strip={s} />
        ))}
      </div>
      <div className="ml-[37px] flex border-l border-[#222]">
        {SECTION_STRIPS.map((s) => (
          <MixerStrip key={s.id} strip={s} />
        ))}
      </div>
      <div className="flex-1 bg-[#333]" />
    </div>
  );
}

/* ---------- right column ---------- */

function PerformanceMeter() {
  return (
    <section className="h-[175px] shrink-0 overflow-hidden bg-[#333] pt-1.5 pl-[5px] text-[11px] leading-[13px] whitespace-nowrap text-[#e4e4e4]">
      <div className="flex h-[43px] gap-0.5">
        <svg width="27" height="34" viewBox="0 0 27 34">
          <path d="M0 0h13v34H0zM14 0h12v34H14z" fill="#125c4c" />
          <path d="M14 32h12v2H14z" fill="#2de0e6" />
        </svg>
        <div>
          <p className="text-[9px] font-bold text-[#a8a8a8]">cur/avg: 1.76/1.73%</p>
          <svg width="88" height="22" viewBox="0 0 88 22" fill="none">
            <path d="M2 21h78l3-2 4 2" stroke="#ddd" />
            <path d="M8 20h8M24 20h10M74 19h12" stroke="#3fa312" strokeWidth="1.500" />
          </svg>
        </div>
      </div>
      <p>Total CPU: 1.8%</p>
      <p>RT CPU: 8.2%</p>
      <p>RT L/B: 2.41ms/2.67ms</p>
      <p className="mt-[13px]">Disk read: 0B/s</p>
      <p>Disk write: 0B/s</p>
      <p className="mt-[13px]">RAM use: 3882MB</p>
      <p>Sys free: 59947MB/65342</p>
    </section>
  );
}

const SCALE = ['6', '12', '18', '24', '30', '36', '42', '48', '54'];

function MasterMeter() {
  return (
    <div className="h-[352px] shrink-0 bg-[#2b2b2b] px-[7px] pt-[9px] text-[10px] text-[#d8d8d8]">
      <div className="flex h-[14px] justify-between pr-4 pl-[14px]">
        <span>-6.4</span>
        <span>-5.2</span>
      </div>
      <svg width="108" height="328" viewBox="0 0 108 328" shapeRendering="crispEdges">
        <path d="M0 0h108v328H0z" fill="#242424" />
        <path d="M7 0h30v316H7zM70 0h30v316H70z" fill="#2a2a2a" />
        <path d="M0 7.500h47M62 7.500h46" stroke="#888" />
        <circle cx="54.500" cy="7.500" r="5" fill="#222" stroke="#8a8a8a" strokeWidth="3.500" shapeRendering="auto" />
        <path d="M7 126h14v190H7zM87 123h13v192H87z" fill="#f5b63f" />
        <path d="M23 78h14v238H23zM70 85h15v230H70zM23 57h14v1H23zM70 66h15v1H70z" fill="#d8d8d8" />
        {SCALE.map((s, i) => (
          <g key={s}>
            {i > 1 && <path d={`M40 ${45.5 + i * 31}h4M63 ${45.5 + i * 31}h4`} stroke="#ddd" />}
            {i > 2 && <path d={`M0 ${45.5 + i * 31}h4M103 ${45.5 + i * 31}h4`} stroke="#f5b63f" />}
            <path d={`M46 ${45.5 + i * 31}h3M58 ${45.5 + i * 31}h3`} stroke="#999" />
            <text x="53.500" y={48 + i * 31} fill="#aaa" fontSize="8" fontWeight="bold" textAnchor="middle">{s}</text>
          </g>
        ))}
      </svg>
    </div>
  );
}

function MasterStrip() {
  return (
    <section className="mr-1 flex min-h-0 flex-1 flex-col border-x border-[#222] bg-[#262626]">
      <div className="flex min-h-0 flex-1 flex-col border-t border-r border-[#333] px-0.5 pr-[3px]">
        <div className="flex min-h-0 flex-1 items-end justify-end pr-2 pb-[3px] text-[11px] leading-3 text-[#aaa]">Fx</div>
        <div className="h-1 shrink-0 bg-[#3c3c3c]" />
        <div className="mt-0.5 flex h-5 shrink-0 items-center border-b-2 border-[#777]">
          <button className="relative h-full w-[84px] border-r border-[#666] bg-[#484848] pl-px text-left text-[10px] text-[#e4e4e4]">
            LynxTWO-C Play
            <span className="absolute top-[18px] left-0 h-0.5 w-full bg-[#d8d8d8]" />
          </button>
          <span className="mr-1 ml-auto"><SendPlug active /></span>
        </div>
        {Array.from({ length: 12 }, (_, i) => (
          <div key={i} className="flex h-6 shrink-0 items-center justify-end border-b-2 border-[#333] pr-1"><SendPlug /></div>
        ))}
        <div className="h-4 shrink-0 border-b-2 border-[#333]" />
      </div>
      <div className="grid h-[54px] shrink-0 grid-cols-[1fr_44px] bg-[#1f1f1f] pt-1.5 pl-0.5 text-[10px] text-[#b4b4b4]">
        <div>
          <div className="flex h-[18px] items-center gap-[9px] pl-0.5"><PowerIcon color="#b4b4b4" />Inserts<span>+</span></div>
          <div className="flex items-center gap-1">
            <button className={clsx('h-[21px] w-[23px]', HATCH_DARK)}>I/O</button>
            <span className="w-[9px] text-center font-bold text-[#5e9c33]">M</span>
            <div className="text-[9px] leading-[11px]">
              <p className="border-b border-[#333] pb-px text-[#3a3a3a]">Receive</p>
              <p className="text-center text-[#2c8da3]">Send</p>
            </div>
          </div>
        </div>
        <div className="flex flex-col items-center pr-1">
          <button className="h-[17px] border-b border-[#444] px-1 text-[10px] font-bold">Menu</button>
          <svg width="22" height="18" viewBox="0 0 22 18" className="mt-1.5" stroke="#aaa"><path d="M0 1.500h22M4 5.500h14M0 9.500h22M4 13.500h14M0 17.500h22" /></svg>
        </div>
      </div>
      <MasterMeter />
      <div className="flex h-[15px] shrink-0 items-center justify-between bg-[#2b2b2b] pr-[25px] pl-[29px] text-[11px] text-[#b8b8b8]">
        <span>L</span>
        <span>R</span>
      </div>
      <div className="flex h-[31px] shrink-0 gap-px border-b border-[#2a2a2a]">
        <span className="w-6 bg-[#505050]" />
        <div className="flex-1">
          <PanBar className="h-[15px]" />
          <p className="h-[15px] bg-[#4c4c4c] text-center text-[10px] leading-[16px] text-[#e0e0e0]">Trim</p>
        </div>
        <button aria-label="Mono" className="flex w-6 items-center justify-center bg-[#505050]">
          <svg width="18" height="18" viewBox="0 0 18 18" fill="none" stroke="#ddd" strokeWidth="1.300"><circle cx="9" cy="9" r="3" fill="#eee" /><path d="M4 2.500a8 8 0 000 13M14 2.500a8 8 0 010 13M2 9h3M13 9h3" /></svg>
        </button>
      </div>
      <div className="mt-px flex h-[82px] shrink-0 items-center bg-[#505050] pl-[3px]">
        <div className="flex w-[23px] flex-col gap-[26px] pb-1">
          <button className={clsx(STRIP_BTN, HATCH_DARK)}>M</button>
          <button className={clsx(STRIP_BTN, HATCH_DARK)}>S</button>
        </div>
        <svg width="96" height="80" viewBox="0 0 96 80" fill="none">
          <circle cx="16" cy="39" r="14.500" stroke="#8c8c8c" />
          <circle cx="16" cy="39" r="10.500" stroke="#8c8c8c" strokeWidth="2.500" />
          <path d="M10 48a11 11 0 0012 0" stroke="#333" strokeWidth="3" />
          <circle cx="16" cy="39" r="8" fill="#6c6c6c" />
          <path d="M16.500 40l6 8" stroke="#ddd" strokeWidth="1.500" />
          <circle cx="16" cy="24.500" r="1.800" fill="#999" /><circle cx="6" cy="50" r="1.800" fill="#999" /><circle cx="26" cy="50" r="1.800" fill="#999" />
          <circle cx="63" cy="38" r="25.500" stroke="#8c8c8c" strokeWidth="1.500" />
          <circle cx="63" cy="38" r="18" stroke="#2e2e2e" strokeWidth="6" />
          <path d="M52 52.500A18 18 0 0163 20" stroke="#a4a4a4" strokeWidth="5" />
          <circle cx="63" cy="38" r="14.500" fill="#707070" stroke="#3a3a3a" />
          <path d="M63 17v19" stroke="#eee" strokeWidth="1.500" />
          <circle cx="63" cy="12" r="3" fill="#8c8c8c" /><circle cx="47" cy="59" r="3" fill="#8c8c8c" /><circle cx="79" cy="59" r="3" fill="#8c8c8c" />
          <text x="35" y="73" fill="#999" fontSize="8">MIN</text>
          <text x="75" y="73" fill="#999" fontSize="8">MAX</text>
        </svg>
      </div>
      <dl className="grid h-[44px] shrink-0 grid-cols-[52px_1fr_auto] items-center bg-[#1f1f1f] px-1.5 text-[9px] leading-[14px]">
        {[['Volume', '0.00dB'], ['Panorama', 'center'], ['Width/Dual', '100W']].map(([k, v]) => (
          <div key={k} className="contents">
            <dt className="font-bold text-[#999]">{k}</dt>
            <span className="mr-2 border-b border-dashed border-[#555]" />
            <dd className="text-right text-[10px] text-[#e0e0e0]">{v}</dd>
          </div>
        ))}
      </dl>
    </section>
  );
}

export default function App() {
  return (
    <div className="flex h-screen flex-col overflow-hidden bg-[#444] font-['Liberation_Sans',Arial,sans-serif] text-[11px] leading-[14px]">
      <MenuBar />
      <main className="flex min-h-0 flex-1">
        <aside className="flex w-[352px] shrink-0 flex-col">
          <FxBrowser />
          <DockTab label="FX Browser" className="h-[21px] pb-1.5" />
          <MediaExplorer />
          <DockTab label="Media Explorer" className="h-[14px]" />
        </aside>
        <div className="flex min-w-0 flex-1 flex-col pl-[5px]">
          <Transport />
          <div className="flex min-h-0 flex-1 pr-px">
            <TrackPanel />
            <Timeline />
          </div>
          <Mixer />
          <DockTab label="Mixer" className="h-[14px]" />
        </div>
        <aside className="flex w-[132px] shrink-0 flex-col pb-[5px] pl-[5px]">
          <PerformanceMeter />
          <div className="h-3 shrink-0" />
          <MasterStrip />
        </aside>
      </main>
    </div>
  );
}
